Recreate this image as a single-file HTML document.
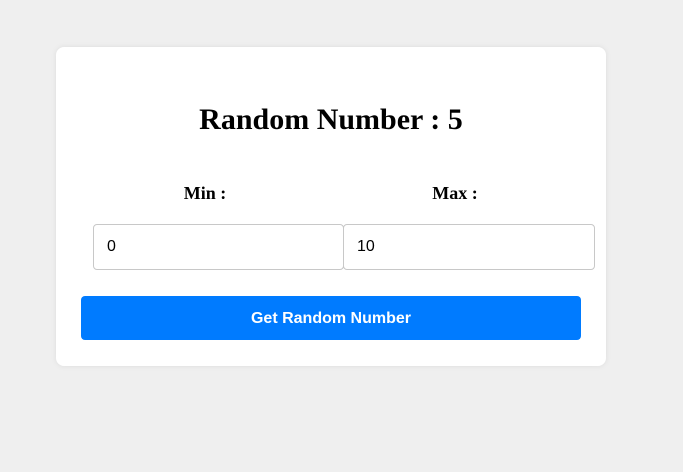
<!DOCTYPE html>
<html><head><style>
body{margin:0;background:#efefef;width:683px;height:472px;position:relative;overflow:hidden}
.card{position:absolute;left:56px;top:47px;width:550px;height:319px;background:#fff;border-radius:8px;box-shadow:0 0 6px rgba(0,0,0,.08)}
h1{position:absolute;left:0;width:550px;top:56px;margin:0;text-align:center;font:bold 30px "Liberation Serif",serif;color:#000}
.lab{position:absolute;top:136px;font:bold 18px "Liberation Serif",serif;width:250px;text-align:center}
.in{position:absolute;top:177px;width:251px;height:46px;border:1px solid #c8c8c8;border-radius:4px;box-sizing:border-box;font:16px "Liberation Sans",sans-serif;padding:13px 0 0 13px}
.btn{position:absolute;left:25px;top:249px;width:500px;height:44px;background:#007bff;border-radius:4px;color:#fff;font:bold 16px "Liberation Sans",sans-serif;text-align:center;line-height:46px}
</style></head><body>
<div class="card">
<h1>Random Number : 5</h1>
<div class="lab" style="left:24px">Min :</div>
<div class="lab" style="left:274px">Max :</div>
<div class="in" style="left:37px">0</div>
<div class="in" style="left:287px;width:252px">10</div>
<div class="btn">Get Random Number</div>
</div>
</body></html>
